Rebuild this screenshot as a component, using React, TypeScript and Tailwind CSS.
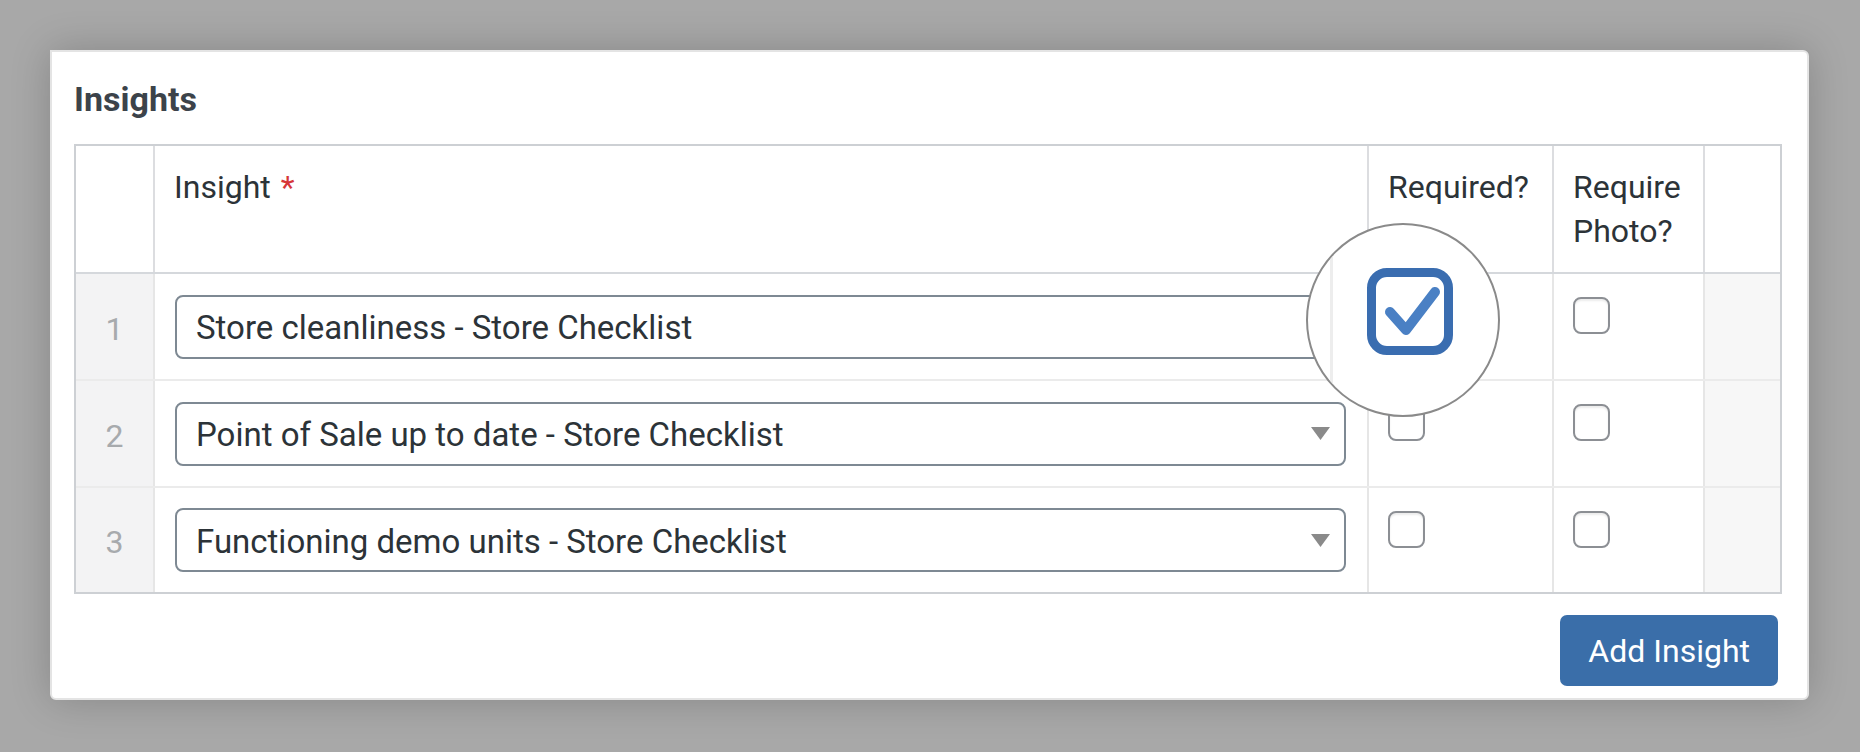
import React from "react";

const font = { fontFamily: "Roboto, 'Liberation Sans', sans-serif" };

function Checkbox() {
  return (
    <div className="w-[37px] h-[37px] rounded-[8px] border-2 border-[#8c8f94] bg-white shadow-[inset_0_2px_2px_rgba(0,0,0,0.08)]" />
  );
}

function Select({ text, arrow = true }: { text: string; arrow?: boolean }) {
  return (
    <div className="h-[64px] w-full rounded-[8px] border-2 border-[#7e8993] bg-white flex items-center justify-between pl-[19px] pr-[14px]">
      <span className="text-[33px] leading-[40px] text-[#2c3338] whitespace-nowrap pt-[3px]">{text}</span>
      {arrow && (
        <svg width="19" height="13" viewBox="0 0 19 13">
          <polygon points="0,0 19,0 9.5,13" fill="#8a8a8a" />
        </svg>
      )}
    </div>
  );
}

const rows = [
  "Store cleanliness - Store Checklist",
  "Point of Sale up to date - Store Checklist",
  "Functioning demo units - Store Checklist",
];

export default function App() {
  return (
    <div className="w-[1860px] h-[752px] bg-[#a8a8a8] pl-[50px] pt-[50px] overflow-hidden" style={font}>
      <div className="relative w-[1759px] h-[650px] bg-white border-2 border-[#e4e4e4] rounded-[6px] rounded-tl-none shadow-[0_0_40px_rgba(0,0,0,0.2)] pl-[22px] pt-[27px]">
        <h2 className="text-[34px] leading-[40px] font-bold text-[#3c434a]">Insights</h2>

        <div className="mt-[25px] w-[1708px] border-2 border-[#cdd0d4]">
          {/* header */}
          <div className="grid grid-cols-[77px_1214px_185px_151px_77px] h-[126px] text-[32px] leading-[44px] text-[#2c3338]">
            <div />
            <div className="border-l-2 border-[#dcdde0] pl-[19px] pt-[19px]">
              Insight <span className="text-[#d63638] ml-[2px]">*</span>
            </div>
            <div className="border-l-2 border-[#dcdde0] pl-[19px] pt-[19px]">Required?</div>
            <div className="border-l-2 border-[#dcdde0] pl-[19px] pt-[19px]">
              Require
              <br />
              Photo?
            </div>
            <div className="border-l-2 border-[#dcdde0]" />
          </div>

          {rows.map((r, i) => (
            <div
              key={i}
              className={`grid grid-cols-[77px_1214px_185px_151px_77px] ${i === 2 ? "h-[106px]" : "h-[107px]"} border-t-2 ${i === 0 ? "border-[#d5d8dc]" : "border-[#ebebeb]"}`}
            >
              <div className="bg-[#f3f3f4] flex items-center justify-center text-[32px] text-[#a7aaad] pt-[4px]">
                {i + 1}
              </div>
              <div className="border-l-2 border-[#e6e6e6] pl-[20px] pr-[21px] flex items-center">
                <Select text={r} />
              </div>
              <div className="border-l-2 border-[#e6e6e6] pl-[19px] pt-[23px]">
                <Checkbox />
              </div>
              <div className="border-l-2 border-[#e6e6e6] pl-[19px] pt-[23px]">
                <Checkbox />
              </div>
              <div className="border-l-2 border-[#e6e6e6] bg-[#f7f7f7]" />
            </div>
          ))}
        </div>

        <div className="flex justify-end w-[1708px] mt-[21px]">
          <button className="h-[71px] px-[28px] mr-[4px] rounded-[7px] bg-[#3a6ea9] text-white text-[32px] leading-[40px]">
            Add Insight
          </button>
        </div>

        {/* magnifier */}
        <div className="absolute left-[1254px] top-[171px] w-[194px] h-[194px] rounded-full border-2 border-[#8a8a8a] bg-white overflow-hidden">
          <div className="absolute left-[22px] top-0 w-[3px] h-[159px] bg-[#ededed]" />
          <div className="absolute left-[59px] top-[43px] w-[86px] h-[87px] rounded-[20px] border-[9px] border-[#3a6db0]" />
          <svg className="absolute left-[59px] top-[43px]" width="86" height="87" viewBox="0 0 86 87">
            <polyline
              points="23,44 39,62 68,24"
              fill="none"
              stroke="#4a80c4"
              strokeWidth="10"
              strokeLinecap="round"
              strokeLinejoin="round"
            />
          </svg>
        </div>
      </div>
    </div>
  );
}
